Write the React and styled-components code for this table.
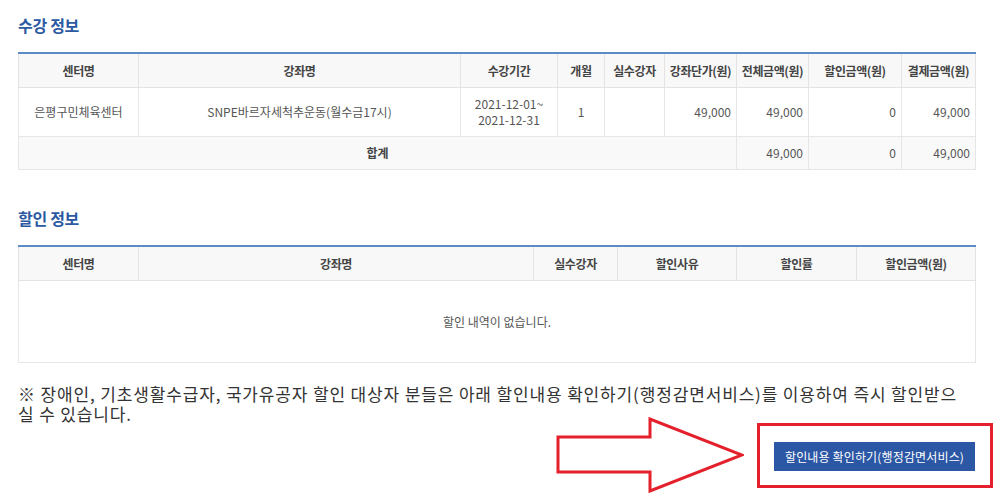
import React from 'react';
import styled, { createGlobalStyle } from 'styled-components';

const GlobalStyle = createGlobalStyle`
  body {
    margin: 0;
    background: #fff;
    font-family: "Noto Sans CJK KR", "Noto Sans", sans-serif;
  }
`;

const courseCols = [120, 322, 97, 47, 60, 72, 72, 93, 74];
const discountCols = [120, 395, 84, 119, 120, 119];

const App = () => {
  return (
    <Page>
      <GlobalStyle />
      <Section>
        <Title>수강 정보</Title>
        <Table>
          <colgroup>
            {courseCols.map((w, i) => (
              <col key={i} width={w} />
            ))}
          </colgroup>
          <thead>
            <tr>
              <Th>센터명</Th>
              <Th>강좌명</Th>
              <Th>수강기간</Th>
              <Th>개월</Th>
              <Th>실수강자</Th>
              <Th>강좌단가(원)</Th>
              <Th>전체금액(원)</Th>
              <Th>할인금액(원)</Th>
              <Th>결제금액(원)</Th>
            </tr>
          </thead>
          <tbody>
            <tr>
              <Td $h={49}>은평구민체육센터</Td>
              <Td>SNPE바르자세척추운동(월수금17시)</Td>
              <Td>
                2021-12-01~
                <br />
                2021-12-31
              </Td>
              <Td>1</Td>
              <Td></Td>
              <Td $right>49,000</Td>
              <Td $right>49,000</Td>
              <Td $right>0</Td>
              <Td $right>49,000</Td>
            </tr>
          </tbody>
          <tfoot>
            <tr>
              <Td colSpan={6} $total $bold $h={33}>
                합계
              </Td>
              <Td $total $right>49,000</Td>
              <Td $total $right>0</Td>
              <Td $total $right>49,000</Td>
            </tr>
          </tfoot>
        </Table>
      </Section>

      <Section>
        <Title>할인 정보</Title>
        <Table>
          <colgroup>
            {discountCols.map((w, i) => (
              <col key={i} width={w} />
            ))}
          </colgroup>
          <thead>
            <tr>
              <Th>센터명</Th>
              <Th>강좌명</Th>
              <Th>실수강자</Th>
              <Th>할인사유</Th>
              <Th>할인률</Th>
              <Th>할인금액(원)</Th>
            </tr>
          </thead>
          <tbody>
            <tr>
              <Td colSpan={6} $h={82}>
                할인 내역이 없습니다.
              </Td>
            </tr>
          </tbody>
        </Table>
      </Section>

      <Notice>
        ※ 장애인, 기초생활수급자, 국가유공자 할인 대상자 분들은 아래 할인내용 확인하기(행정감면서비스)를 이용하여 즉시 할인받으
        <br />실 수 있습니다.
      </Notice>

      <ActionRow>
        <svg width="188" height="76" viewBox="-2 -2 188 76">
          <polygon
            points="0,18 92,18 92,0 184,36 92,72 92,53 0,53"
            fill="#fff"
            stroke="#e3202b"
            strokeWidth="3"
            strokeLinejoin="miter"
          />
        </svg>
        <Highlight>
          <ReductionButton type="button">할인내용 확인하기(행정감면서비스)</ReductionButton>
        </Highlight>
      </ActionRow>
    </Page>
  );
};

export default App;

const Page = styled.div`
  width: 1000px;
  height: 502px;
  overflow: hidden;
  box-sizing: border-box;
  padding: 15px 0 0 18px;
`;

const Section = styled.section`
  width: 957px;
  margin-bottom: 38px;

  & + & {
    margin-bottom: 21px;
  }
`;

const Title = styled.h2`
  margin: 0 0 17px;
  font-size: 16px;
  line-height: 20px;
  font-weight: 700;
  letter-spacing: -0.3px;
  color: #2c5aa2;
`;

const Table = styled.table`
  width: 957px;
  table-layout: fixed;
  border-collapse: collapse;
  border-top: 2px solid #5b8cc6;
  font-size: 12px;
`;

const Th = styled.th`
  height: 33px;
  padding: 0 4px;
  background: #f8f8f8;
  border: 1px solid #e3e3e3;
  border-top: 0;
  font-weight: 700;
  color: #444;
  text-align: center;
  letter-spacing: -0.4px;
  white-space: nowrap;
`;

const Td = styled.td`
  height: ${(p) => (p.$h ? `${p.$h - 1}px` : 'auto')};
  padding: 0 5px;
  border: 1px solid #e6e6e6;
  background: ${(p) => (p.$total ? '#f9f9f9' : '#fff')};
  font-weight: ${(p) => (p.$bold ? 700 : 400)};
  color: ${(p) => (p.$bold ? '#444' : '#555')};
  text-align: ${(p) => (p.$right ? 'right' : 'center')};
  line-height: 16px;
  letter-spacing: 0;
  white-space: nowrap;
`;

const Notice = styled.p`
  margin: 0;
  width: 982px;
  font-size: 17px;
  line-height: 20px;
  letter-spacing: 0.85px;
  color: #333;
`;

const ActionRow = styled.div`
  display: flex;
  justify-content: flex-end;
  align-items: center;
  gap: 13px;
  margin-top: -7px;
  padding-right: 7px;
`;

const Highlight = styled.div`
  display: flex;
  box-sizing: border-box;
  width: 236px;
  height: 65px;
  padding: 16px 15px 14px 14px;
  border: 3px solid #e3202b;
`;

const ReductionButton = styled.button`
  width: 201px;
  height: 29px;
  padding: 0;
  border: 0;
  background: #2b57a5;
  color: #fff;
  font-family: "Noto Sans CJK KR", sans-serif;
  font-size: 12px;
  letter-spacing: 0.15px;
  cursor: pointer;
`;
